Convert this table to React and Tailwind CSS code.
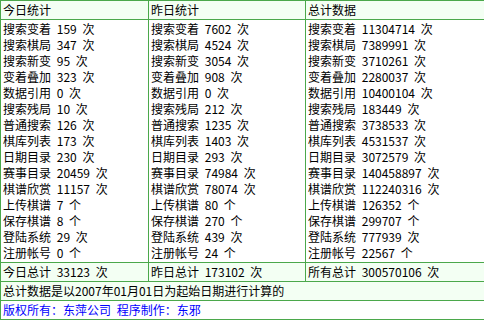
const today = [
  ["搜索变着", "159", "次"],
  ["搜索棋局", "347", "次"],
  ["搜索新变", "95", "次"],
  ["变着叠加", "323", "次"],
  ["数据引用", "0", "次"],
  ["搜索残局", "10", "次"],
  ["普通搜索", "126", "次"],
  ["棋库列表", "173", "次"],
  ["日期目录", "230", "次"],
  ["赛事目录", "20459", "次"],
  ["棋谱欣赏", "11157", "次"],
  ["上传棋谱", "7", "个"],
  ["保存棋谱", "8", "个"],
  ["登陆系统", "29", "次"],
  ["注册帐号", "0", "个"],
];

const yesterday = [
  "7602", "4524", "3054", "908", "0", "212", "1235", "1403",
  "293", "74984", "78074", "80", "270", "439", "24",
];

const total = [
  "11304714", "7389991", "3710261", "2280037", "10400104", "183449", "3738533", "4531537",
  "3072579", "140458897", "112240316", "126352", "299707", "777939", "22567",
];

const cell = "border border-[#4ba84b] px-[2px] py-px align-top leading-4 whitespace-nowrap";

const StatList = ({ values }) => (
  <div className="flex flex-col">
    {today.map(([label, , unit], i) => (
      <div key={label}>
        {label} {values[i]} {unit}
      </div>
    ))}
  </div>
);

const App = () => {
  return (
    <div className="w-[484px] h-[320px] bg-white text-black text-[12px] [word-spacing:3px] font-['Noto_Sans_CJK_SC','Noto_Sans',sans-serif]">
      <table className="w-[484px] border-collapse table-fixed">
        <colgroup>
          <col className="w-[148px]" />
          <col className="w-[157px]" />
          <col className="w-[179px]" />
        </colgroup>
        <tbody>
          <tr className="bg-[#f3fff3]">
            <td className={cell}>今日统计</td>
            <td className={cell}>昨日统计</td>
            <td className={cell}>总计数据</td>
          </tr>
          <tr>
            <td className={cell}>
              <StatList values={today.map((r) => r[1])} />
            </td>
            <td className={cell}>
              <StatList values={yesterday} />
            </td>
            <td className={cell}>
              <StatList values={total} />
            </td>
          </tr>
          <tr className="bg-[#f3fff3]">
            <td className={cell}>今日总计 33123 次</td>
            <td className={cell}>昨日总计 173102 次</td>
            <td className={cell}>所有总计 300570106 次</td>
          </tr>
          <tr className="bg-[#f3fff3]">
            <td className={cell} colSpan={3}>
              总计数据是以2007年01月01日为起始日期进行计算的
            </td>
          </tr>
          <tr>
            <td className={cell + " text-[#0000ff]"} colSpan={3}>
              版权所有：东萍公司 程序制作：东邪
            </td>
          </tr>
        </tbody>
      </table>
    </div>
  );
};

export default App;
